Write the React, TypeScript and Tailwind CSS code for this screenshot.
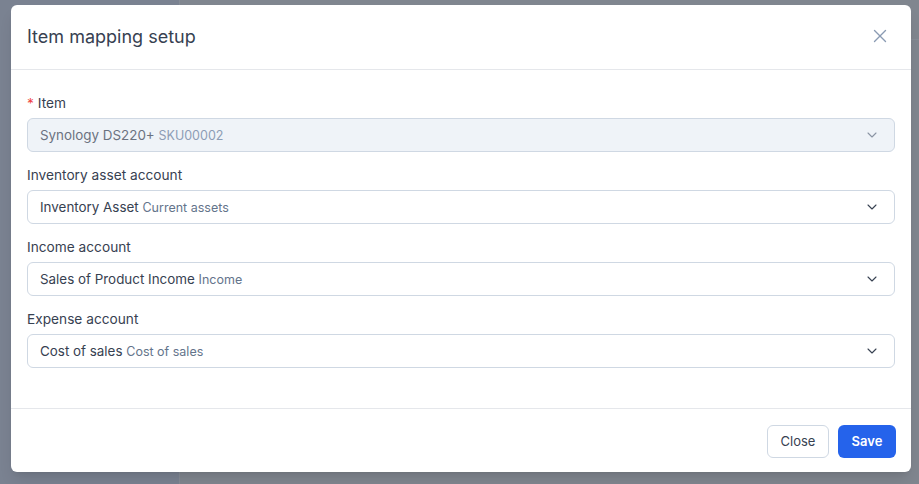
import { ChevronDown, X } from "lucide-react";

const fields = [
  { label: "Inventory asset account", value: "Inventory Asset", sub: "Current assets" },
  { label: "Income account", value: "Sales of Product Income", sub: "Income" },
  { label: "Expense account", value: "Cost of sales", sub: "Cost of sales" },
];

function Select({ value, sub, disabled }: { value: string; sub: string; disabled?: boolean }) {
  return (
    <div
      className={
        "flex h-[34px] items-center justify-between rounded-md border border-[#cfd8e3] pl-3 pr-[14px] " +
        (disabled ? "bg-[#eff3f8]" : "bg-white")
      }
    >
      <div className="text-[13.4px] leading-5">
        <span className={disabled ? "text-[#6b7280]" : "text-[#374151]"}>{value}</span>{" "}
        <span className={"text-[12.5px] " + (disabled ? "text-[#8d9db5]" : "text-[#64748b]")}>{sub}</span>
      </div>
      <ChevronDown
        className={"h-4 w-4 " + (disabled ? "text-[#8a94a3]" : "text-[#374151]")}
        strokeWidth={1.6}
      />
    </div>
  );
}

export default function App() {
  return (
    <div
      className="flex h-[484px] w-[919px] overflow-hidden bg-[#80868f]"
      style={{ fontFamily: "Inter, 'Noto Sans', sans-serif" }}
    >
      {/* backdrop page */}
      <div className="relative flex w-full">
        <div className="w-[180px] shrink-0 border-r border-[#868c96] bg-[#7a8291]" />
        <div className="flex-1">
          <div className="h-[40px] border-b border-[#868c96]" />
        </div>

        {/* modal */}
        <div className="absolute left-[11px] top-[5px] flex h-[467px] w-[900px] flex-col rounded-md bg-white shadow-lg">
          <div className="flex h-[65px] shrink-0 items-center justify-between border-b border-[#e5e7eb] px-4 pb-[2px]">
            <h2 className="text-[18px] font-normal text-[#374151]">Item mapping setup</h2>
            <button className="mr-[4px] text-[#8a9bb3]">
              <X className="h-[22px] w-[22px]" strokeWidth={1.5} />
            </button>
          </div>

          <div className="flex flex-1 flex-col px-4 pt-[23px]">
            <div>
              <label className="mb-[5px] block text-[13.7px] leading-5 text-[#374151]">
                <span className="mr-1 text-[#ef4444]">*</span>Item
              </label>
              <Select value="Synology DS220+" sub="SKU00002" disabled />
            </div>
            {fields.map((f) => (
              <div key={f.label} className="mt-[13px]">
                <label className="mb-[5px] block text-[13.7px] leading-5 text-[#374151]">{f.label}</label>
                <Select value={f.value} sub={f.sub} />
              </div>
            ))}
          </div>

          <div className="flex h-[64px] shrink-0 items-center justify-end gap-[9px] border-t border-[#e5e7eb] px-[15px] pt-[2px]">
            <button className="h-[33px] w-[62px] rounded-md border border-[#cfd8e3] bg-white text-[13px] text-[#374151]">
              Close
            </button>
            <button className="h-[33px] w-[58px] rounded-md bg-[#2563eb] text-[13px] font-semibold text-white">
              Save
            </button>
          </div>
        </div>
      </div>
    </div>
  );
}
